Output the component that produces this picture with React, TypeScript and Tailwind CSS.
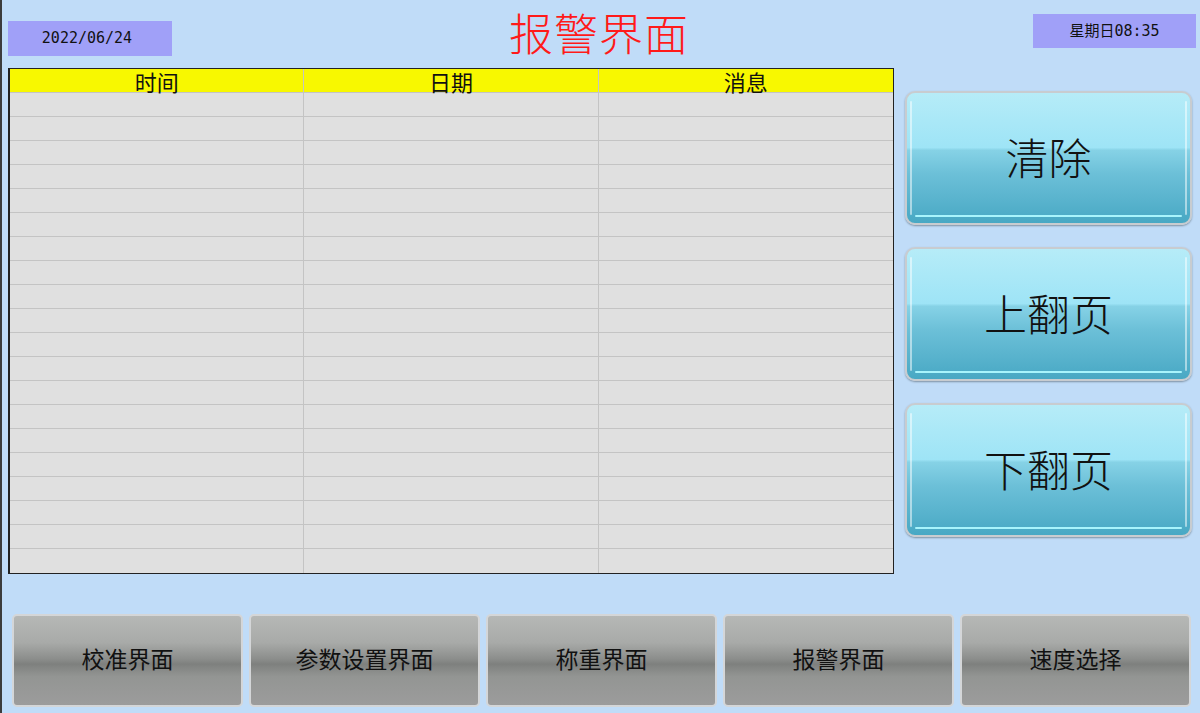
const navItems = ["校准界面", "参数设置界面", "称重界面", "报警界面", "速度选择"];
const sideItems = ["清除", "上翻页", "下翻页"];
const rows = Array.from({ length: 20 }, (_, i) => i);

const cjk = "font-['Noto_Sans_CJK_SC','Noto_Sans',sans-serif]";

function SideButton({ label }: { label: string }) {
  return (
    <button className="relative w-[287px] h-[134px] rounded-[10px] border-2 border-[#c8ccd0] shadow-[0_1px_2px_rgba(0,0,0,0.35)] overflow-hidden bg-[linear-gradient(to_bottom,#b6ecf8_0%,#9ee4f6_42%,#86d2e6_44%,#6cc0d8_62%,#48a8c4_100%)]">
      <div className="absolute left-2 right-2 bottom-[6px] h-[2px] rounded-full bg-[#a8f4fc]" />
      <div className="absolute top-2 bottom-2 left-[3px] w-[2px] rounded-full bg-white/50" />
      <div className="absolute top-2 bottom-2 right-[3px] w-[2px] rounded-full bg-white/50" />
      <span className={`relative text-[43px] leading-none text-[#111] font-light ${cjk}`}>
        {label}
      </span>
    </button>
  );
}

function NavButton({ label }: { label: string }) {
  return (
    <button className="w-[231px] h-[93px] rounded-[5px] border-2 border-[#d4d6d8] bg-[linear-gradient(to_bottom,#b6b8b6_0%,#a8aaa8_30%,#8c8e8c_48%,#7e807e_54%,#939593_68%,#9c9c9c_100%)]">
      <span className={`text-[23px] leading-none text-[#111] ${cjk}`}>{label}</span>
    </button>
  );
}

export default function App() {
  return (
    <div className="w-[1200px] h-[713px] bg-[#c0dcf8] border-l-2 border-[#3c3c3c] flex flex-col overflow-hidden">
      <div className="h-[68px] flex items-start">
        <div className="mt-[21px] ml-[6px] w-[164px] h-[35px] bg-[#a0a0f8] flex items-center justify-center">
          <span className="pr-[6px] text-[15px] text-[#111] font-['DejaVu_Sans_Mono','Liberation_Mono',monospace]">
            2022/06/24
          </span>
        </div>
        <div className="flex-1 text-center pr-[7px]">
          <h1 className={`mt-[6px] text-[44px] leading-[52px] text-[#ff1a1a] font-light tracking-[1px] ${cjk}`}>
            报警界面
          </h1>
        </div>
        <div className="mt-[14px] mr-[4px] w-[163px] h-[34px] bg-[#a0a0f8] flex items-center justify-center">
          <span className={`text-[15px] text-[#111] ${cjk}`}>
            星期日<span className="font-['DejaVu_Sans_Mono','Liberation_Mono',monospace]">08:35</span>
          </span>
        </div>
      </div>

      <div className="flex items-start">
        <div className="ml-[6px] w-[886px] border border-l-2 border-[#222] bg-[#e0e0e0]">
          <div className="grid grid-cols-3 h-[24px] bg-[#f8f800] border-b border-[#c4c4c4]">
            {["时间", "日期", "消息"].map((h, i) => (
              <div
                key={h}
                className={`flex items-center justify-center text-[22px] leading-none text-[#111] ${cjk} ${i < 2 ? "border-r border-[#c4c4c4]" : ""}`}
              >
                {h}
              </div>
            ))}
          </div>
          {rows.map((r) => (
            <div
              key={r}
              className={`grid grid-cols-3 h-[24px] ${r < 19 ? "border-b border-[#c4c4c4]" : ""}`}
            >
              <div className="border-r border-[#c4c4c4]" />
              <div className="border-r border-[#c4c4c4]" />
              <div />
            </div>
          ))}
        </div>
        <div className="ml-[11px] mt-[23px] flex flex-col gap-[22px]">
          {sideItems.map((s) => (
            <SideButton key={s} label={s} />
          ))}
        </div>
      </div>

      <div className="mt-[40px] ml-[10px] flex gap-[6px]">
        {navItems.map((n) => (
          <NavButton key={n} label={n} />
        ))}
      </div>
    </div>
  );
}
